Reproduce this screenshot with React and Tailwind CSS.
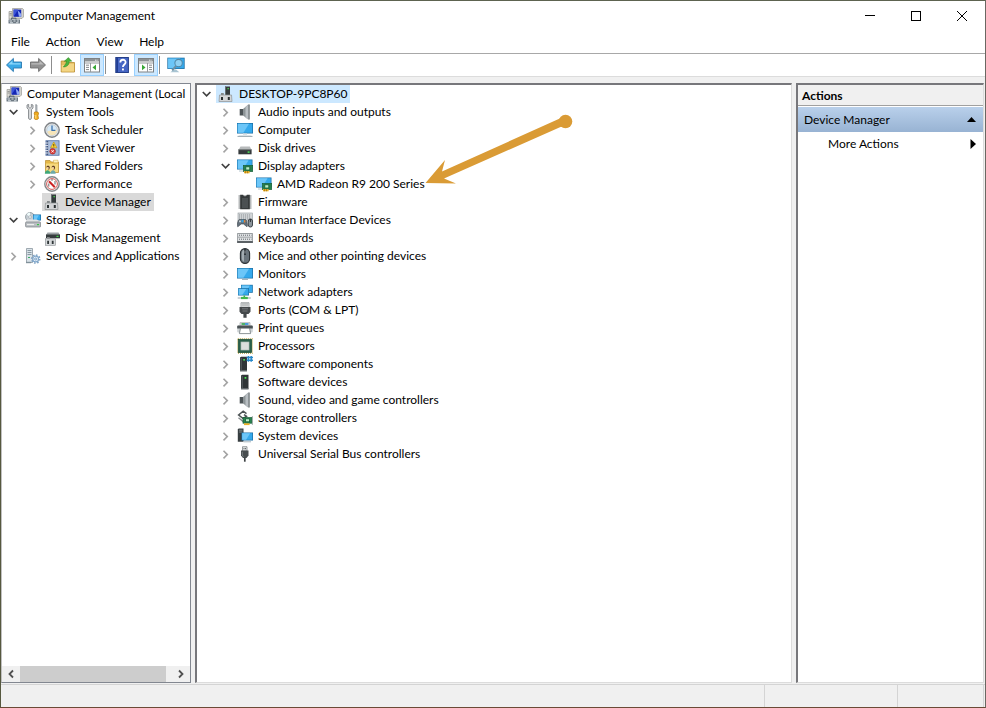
import React from 'react';

function Svg({ children, size = 16 }) {
  return (
    <svg width={size} height={size} viewBox="0 0 16 16" fill="none" className="block shrink-0" aria-hidden="true">
      {children}
    </svg>
  );
}

const Screen = ({ x, y, w, h }) => (
  <g>
    <rect x={x} y={y} width={w} height={h} fill="#1b6fa5" />
    <rect x={x + 0.7} y={y + 0.7} width={w - 1.4} height={h - 1.4} fill="#35a9ec" />
    <path d={`M${x + 0.7} ${y + 0.7}H${x + w * 0.75}L${x + w * 0.4} ${y + h - 0.7}H${x + 0.7}Z`} fill="#6cc6f8" />
  </g>
);

const icons = {
  computerManagement: (
    <Svg>
      <path d="M4.5 0.5H14.5L15.5 1.5V9L14 10.5H4.5Z" fill="#d3d3cd" stroke="#8d8d88" strokeWidth=".6" />
      <path d="M5.6 1.6H13.2V8.8H5.6Z" fill="#1426b4" />
      <path d="M5.6 1.6H10L8 5L5.6 8.6Z" fill="#3d55d8" />
      <path d="M9.5 2L13.2 6V8.8H11Z" fill="#8fa8f6" />
      <path d="M1 3.5H4V11H1Z" fill="#dadad5" stroke="#8b8b85" strokeWidth=".6" />
      <path d="M1.6 5.5H3.6M1.6 7H3.6" stroke="#6a6a6a" strokeWidth=".6" />
      <path d="M0.5 11.5H12V15.5H0.5Z" fill="#6d7983" />
      <path d="M3.5 11.5V10.2H8V11.5" stroke="#52606b" strokeWidth="1" />
      <path d="M1.5 13H4M5.5 13H7.5M9 13H11M2 14.8H5M8 14.8H10.5" stroke="#d9e0e4" strokeWidth="1" />
    </Svg>
  ),
  tools: (
    <Svg>
      <path d="M2 1V4L3.5 5.6V14.2C3.5 15.8 6.5 15.8 6.5 14.2V5.6L8 4V1L6.3 0.3V3.2L5 4.2L3.7 3.2V0.3Z" fill="#d6d8da" stroke="#777c80" strokeWidth=".8" />
      <path d="M10.7 0.5L12 1V8H10.7Z" fill="#bcc1c6" stroke="#7e858c" strokeWidth=".6" />
      <path d="M9.6 8H13L13.6 10L12.9 11L13.5 14.5C12.5 16 10 16 9.2 14.5L9.8 11L9.1 10Z" fill="#f0ad20" stroke="#b9780d" strokeWidth=".7" />
      <path d="M10.8 11V14.5" stroke="#ffe088" />
    </Svg>
  ),
  clock: (
    <Svg>
      <circle cx="8" cy="8" r="7.2" fill="#e9ecee" stroke="#7e8286" strokeWidth="1.4" />
      <circle cx="8" cy="8" r="5.3" fill="#d5e8f6" stroke="#b2b7bb" strokeWidth=".6" />
      <path d="M8 8L13 8A5 5 0 0 1 3.2 9.5Z" fill="#f7e5b8" />
      <path d="M8 3.5V8.4H11.4" stroke="#3d72ad" strokeWidth="1.3" />
    </Svg>
  ),
  event: (
    <Svg>
      <rect x="2" y="0.8" width="13" height="14.4" fill="#b7c9e4" stroke="#5673a6" strokeWidth="1" />
      <path d="M5.5 3H14M5.5 5H14M5.5 7H14M5.5 9H14M5.5 11H14M5.5 13H14" stroke="#7390bd" strokeWidth=".7" />
      <path d="M3.4 1V15" stroke="#42577f" strokeWidth="1.6" />
      <path d="M1 3H4M1 5.5H4M1 8H4M1 10.5H4M1 13H4" stroke="#e6e9ef" strokeWidth=".9" />
      <path d="M9.8 2L13 7.8H6.6Z" fill="#ffd52f" stroke="#ba8e10" strokeWidth=".6" />
      <path d="M9.8 4V6M9.8 6.5V7.2" stroke="#443500" strokeWidth=".9" />
      <circle cx="8.6" cy="11.3" r="2.8" fill="#d93c39" stroke="#a92420" strokeWidth=".6" />
      <path d="M7.4 10.1L9.8 12.5M9.8 10.1L7.4 12.5" stroke="#fff" strokeWidth=".9" />
    </Svg>
  ),
  sharedFolder: (
    <Svg>
      <path d="M1.5 2.5H6L7.5 4H14.5V14.5H1.5Z" fill="#e3b747" stroke="#b98b2c" strokeWidth=".7" />
      <path d="M2 5.5H14V14H2Z" fill="#f6d97d" />
      <path d="M9.5 2.2H14V4.8H9.5Z" fill="#fff2bb" stroke="#cfa647" strokeWidth=".5" />
      <path d="M2.3 9.5C2.3 7.2 5.8 7.2 5.8 9.5L5.2 11.4H4.2V9.5Z" fill="#5c3d20" />
      <path d="M7.6 9.5C7.6 7.2 11.1 7.2 11.1 9.5L10.5 11.4H9.5V9.5Z" fill="#5c3d20" />
      <circle cx="3.7" cy="10" r="1.1" fill="#f5cfa0" />
      <circle cx="9" cy="10" r="1.1" fill="#f5cfa0" />
      <path d="M.8 15.8C.8 11 6.4 11 6.4 15.8Z" fill="#3fa87b" />
      <path d="M6.4 15.8C6.4 11 11.7 11 11.7 15.8Z" fill="#6ba9a9" />
    </Svg>
  ),
  performance: (
    <Svg>
      <circle cx="8" cy="8" r="7.2" fill="#fff" stroke="#85888a" strokeWidth="1.4" />
      <circle cx="8" cy="8" r="5.4" stroke="#c94744" strokeWidth=".9" />
      <path d="M5 5.2L10.8 11.2" stroke="#cc2424" strokeWidth="2" />
      <path d="M4.8 7.5V10.6M8 3V4.8M11 5V8.5" stroke="#565656" strokeWidth=".9" />
    </Svg>
  ),
  device: (
    <Svg>
      <rect x="7" y="0.5" width="5" height="9" fill="#353b3d" />
      <path d="M7 .5H8V9H7Z" fill="#666e70" />
      <rect x="9.5" y="2" width="1.3" height="1.3" fill="#49df50" />
      <path d="M3 7H5.8V9.5H3Z" fill="#85898b" />
      <path d="M1.5 9H13.5L14 15.5H1Z" fill="#d3d5d7" stroke="#8e9294" strokeWidth=".7" />
      <path d="M3 11H5V14H3ZM9.8 11H11.8V14H9.8Z" fill="#282e30" />
    </Svg>
  ),
  storage: (
    <Svg>
      <circle cx="5" cy="5" r="4.5" fill="#c4ccd2" stroke="#7f8990" strokeWidth=".7" />
      <path d="M5 5L1.6 2.2A4.4 4.4 0 0 1 5 .6Z" fill="#effafa" />
      <circle cx="5" cy="5" r="1.3" fill="#fff" stroke="#858f96" strokeWidth=".5" />
      <Screen x={8} y={2.5} w={8} h={6} />
      <path d="M2 7.5H12L15.4 10H0.6Z" fill="#e1e3e5" />
      <rect x="0.6" y="10" width="15" height="5" rx=".8" fill="#b9bec2" stroke="#777d81" strokeWidth=".7" />
      <path d="M2 12.6H9" stroke="#f2f2f2" />
      <rect x="12" y="12" width="2" height="1.2" fill="#38c546" />
    </Svg>
  ),
  diskManagement: (
    <Svg>
      <path d="M3.5 2.5H14.5L16 5H2Z" fill="#9ca2a5" />
      <rect x="2" y="4.5" width="14" height="3.8" fill="#363c3e" />
      <rect x="12.5" y="5.8" width="2" height="1.2" fill="#42da4a" />
      <path d="M3 7H5.8V9H3Z" fill="#85898b" />
      <rect x="1.3" y="8.8" width="10.2" height="6.5" fill="#d5d8da" stroke="#898e91" strokeWidth=".6" />
      <path d="M3.2 10.8H5V14H3.2ZM7.8 10.8H9.6V14H7.8Z" fill="#303638" />
    </Svg>
  ),
  services: (
    <Svg>
      <path d="M1.5 .5H7.5V14.5H1.5Z" fill="#dae3e9" stroke="#8a979f" strokeWidth=".8" />
      <path d="M2.5 2.5H6.5M2.5 4.5H6.5M2.5 6.5H6.5" stroke="#75878f" strokeWidth=".8" />
      <rect x="3" y="9" width="2" height="1" fill="#39ae62" />
      <path d="M1 14.5H6" stroke="#81919a" strokeWidth="1.4" />
      <circle cx="10.7" cy="11" r="4" stroke="#7fa3c4" strokeWidth="1.6" strokeDasharray="1.6 1.5" />
      <circle cx="10.7" cy="11" r="2.9" fill="#eff6fc" stroke="#82a8cb" strokeWidth="1.2" />
      <circle cx="10.7" cy="11" r="1.2" fill="#c4d7e8" stroke="#4c7fae" strokeWidth=".5" />
    </Svg>
  ),
  speaker: (
    <Svg>
      <rect x="2.7" y="5" width="3.5" height="6.5" fill="#4d5457" />
      <path d="M6 5L11.3 .5V15.5L6 11.5Z" fill="#8d9497" />
      <path d="M8.5 3L11.3 .5V15.5L8.5 13.4Z" fill="#b9bfc3" />
      <path d="M11.2 .5H12.8V15.5H11.2Z" fill="#7c8386" />
    </Svg>
  ),
  computer: (
    <Svg>
      <Screen x={0} y={1} w={16} h={10.5} />
      <path d="M6 11.5H10V13H6Z" fill="#dbe2e6" />
      <path d="M2.5 13H13.5L15.5 14.6H.5Z" fill="#e4eaed" />
      <path d="M.5 14.4H15.5" stroke="#9aa8b0" strokeWidth="1" />
    </Svg>
  ),
  disk: (
    <Svg>
      <path d="M3.5 6.5H12.8L14.6 10H1.4Z" fill="#b7babb" />
      <rect x="1.4" y="9.5" width="13.2" height="4.8" fill="#34393b" />
      <path d="M1.4 9.7H14.6" stroke="#7b8182" strokeWidth=".8" />
      <rect x="10.6" y="11.4" width="2" height="1.4" fill="#4ded59" />
    </Svg>
  ),
  display: (
    <Svg>
      <Screen x={0} y={1.5} w={15.5} h={10} />
      <path d="M2 13H7" stroke="#b3c5ce" strokeWidth="1" />
      <rect x="6.5" y="7.5" width="9.3" height="6" fill="#25824e" stroke="#165d35" strokeWidth=".7" />
      <rect x="8.8" y="8.8" width="4" height="3.2" fill="#baf0c8" stroke="#165d35" strokeWidth=".8" />
      <path d="M7 14.2H12.6" stroke="#ecb328" strokeWidth="2.2" />
      <path d="M8.5 13V15.3M10.5 13V15.3" stroke="#8f641a" strokeWidth=".6" />
    </Svg>
  ),
  firmware: (
    <Svg>
      <path d="M1.5 2H14.5M1.5 4H14.5M1.5 6H14.5M1.5 8H14.5M1.5 10H14.5M1.5 12H14.5M1.5 14H14.5" stroke="#6d7375" strokeWidth="1" />
      <path d="M3.2 .8H6.2C6.5 2.8 9.5 2.8 9.8 .8H12.8V15.3H3.2Z" fill="#363a3b" />
      <path d="M5 4H11V14H5Z" fill="#4b5052" />
    </Svg>
  ),
  hid: (
    <Svg>
      <rect x="1" y="1" width="14.5" height="8" fill="#d8dbdd" stroke="#92999d" strokeWidth=".6" />
      <path d="M2.2 3H14.3M2.2 5H14.3M2.2 7H14.3" stroke="#73797d" strokeWidth="1" strokeDasharray="1 1" />
      <path d="M2.5 7.5H8.3C10 7.5 11 14 10 14.8L6.5 12H4.2L.8 14.8C-.5 13.8 .8 7.5 2.5 7.5Z" fill="#64707b" stroke="#39434a" strokeWidth=".6" />
      <path d="M2 9.3H4M3 8.4V10.5" stroke="#eef3f5" strokeWidth=".7" />
      <rect x="6.7" y="8.2" width="1.6" height="2.2" fill="#e78230" />
      <rect x="4.5" y="7.8" width="2" height="2.6" fill="#36a1e1" />
      <rect x="11.3" y="7" width="4.2" height="8" rx="2" fill="#8b949b" stroke="#30383d" strokeWidth=".9" />
      <path d="M13.4 7V10" stroke="#22282d" strokeWidth=".9" />
    </Svg>
  ),
  keyboard: (
    <Svg>
      <path d="M.4 3.5H15.6V12.5H.4Z" fill="#dfe2e4" stroke="#83898c" strokeWidth=".8" />
      <path d="M2 5.2H14.5M1.5 7.2H14.5M2 9.2H14.5" stroke="#64696d" strokeWidth="1" strokeDasharray="1 1" />
      <path d="M.2 11H15.8V13H.2Z" fill="#5b6165" />
    </Svg>
  ),
  mouse: (
    <Svg>
      <rect x="3.4" y=".6" width="9.2" height="14.8" rx="4.6" fill="#69737b" stroke="#292f33" strokeWidth="1.1" />
      <path d="M4.8 6C4.8 2.8 6 1.8 7 1.7V13.8C5 12.8 4.8 11 4.8 9Z" fill="#a3acb2" />
      <path d="M8 1V7" stroke="#30373d" strokeWidth="2" />
      <path d="M8 2.5V5.5" stroke="#c1c9ce" strokeWidth=".7" />
    </Svg>
  ),
  monitor: (
    <Svg>
      <Screen x={0} y={2} w={16} h={10.5} />
      <path d="M5 13.5H11" stroke="#a5b4bd" strokeWidth="1" />
    </Svg>
  ),
  network: (
    <Svg>
      <Screen x={4} y={.8} w={11.8} h={8} />
      <Screen x={1} y={4.2} w={11} h={7.3} />
      <path d="M.7 14H13.8" stroke="#b3babd" strokeWidth="1.4" />
      <path d="M4 14H10.8" stroke="#42b64c" strokeWidth="2.2" />
      <path d="M7.3 11.5V13" stroke="#42b64c" strokeWidth="1.6" />
    </Svg>
  ),
  port: (
    <Svg>
      <path d="M4 .7H12V6H4Z" fill="#e4e6e7" stroke="#858a8c" strokeWidth=".7" />
      <path d="M6 1V4.5M8 1V4.5M10 1V4.5" stroke="#8a8f91" strokeWidth=".8" />
      <path d="M2.5 5H13.5V9.8L11.5 12H9.6V15.7H6.4V12H4.5L2.5 9.8Z" fill="#45494b" />
      <path d="M5 6.8H11M5.5 9H10.5" stroke="#888d8f" strokeWidth=".7" />
    </Svg>
  ),
  printer: (
    <Svg>
      <path d="M3 2.7H13V6H3Z" fill="#e9eced" stroke="#8b9194" strokeWidth=".6" />
      <path d="M4.5 4H8" stroke="#3fae5b" strokeWidth="1.8" />
      <path d="M8 4H11.5" stroke="#3994da" strokeWidth="1.8" />
      <rect x=".2" y="5.4" width="15.6" height="7" rx="1" fill="#cfd4d6" />
      <path d="M.2 6.4Q.2 5.4 1.2 5.4H14.8Q15.8 5.4 15.8 6.4V8.6H.2Z" fill="#4b5255" />
      <path d="M3.5 8.2H12.5L13.6 13.6H2.4Z" fill="#fff" stroke="#5f686d" strokeWidth=".7" />
    </Svg>
  ),
  processor: (
    <Svg>
      <rect x=".8" y=".8" width="14.4" height="14.4" stroke="#b39b3a" strokeWidth="1.2" strokeDasharray="1 1" />
      <rect x="1.4" y="1.4" width="13.2" height="13.2" fill="#2a5f49" stroke="#174c34" strokeWidth=".7" />
      <rect x="4" y="4" width="8" height="8" fill="#dcdedc" stroke="#b5bfb9" strokeWidth=".7" />
    </Svg>
  ),
  softwareComponent: (
    <Svg>
      <path d="M3 1.5L4.2 .8H10V15.3H3Z" fill="#303537" />
      <path d="M4.2 2V14" stroke="#596063" />
      <rect x="6.3" y="3" width="1.6" height="1.6" fill="#4bef57" />
      <path d="M9.6 4.2H16M9.6 1.4H16M11.4 0V5.8M14.2 0V5.8" stroke="#2788c9" strokeWidth="1.5" />
      <path d="M3 14.8H10" stroke="#777e81" />
    </Svg>
  ),
  softwareDevice: (
    <Svg>
      <path d="M4 1.5L5.2 .8H11.5V15.3H4Z" fill="#303537" />
      <path d="M5.2 2V14" stroke="#596063" />
      <rect x="7.6" y="3" width="1.7" height="1.7" fill="#4bef57" />
      <path d="M4 14.8H11.5" stroke="#777e81" />
    </Svg>
  ),
  storageController: (
    <Svg>
      <path d="M9.5 3.6L6.2 1.2L1.6 5L6.2 8.6L9.5 6.2L7 4.6" stroke="#4c5254" strokeWidth="1.5" />
      <path d="M1.5 7.8L6.3 11.6" stroke="#858b8d" strokeWidth="1.4" />
      <rect x="6" y="7.6" width="9" height="5.6" fill="#28834f" stroke="#165d35" strokeWidth=".7" />
      <rect x="8.6" y="8.8" width="4" height="3" fill="#baf0c8" stroke="#165d35" strokeWidth=".8" />
      <path d="M7 14.2H12.6" stroke="#ecb328" strokeWidth="1.8" />
      <path d="M15.4 6V15" stroke="#9ea5a7" strokeWidth=".8" />
    </Svg>
  ),
  system: (
    <Svg>
      <path d="M.8 1L2 .4H6.5V13.8H.8Z" fill="#373e41" />
      <path d="M2 2.2H5.5M2 4H5.5" stroke="#92999c" strokeWidth=".8" />
      <Screen x={4.5} y={4.5} w={11.5} h={8} />
      <path d="M6.5 13.8H14" stroke="#a5b4bd" strokeWidth="1" />
    </Svg>
  ),
  usb: (
    <Svg>
      <path d="M5.5 .7H10V5H5.5Z" fill="#e1e4e5" stroke="#73797c" strokeWidth=".7" />
      <path d="M6.6 2H7.4V3.3H6.6ZM8.2 2H9V3.3H8.2Z" fill="#4d5254" />
      <path d="M4 4.6H11.5V9.5L9.5 12H6L4 9.5Z" fill="#484d4f" />
      <path d="M5.3 5.8V9L6.4 10.7" stroke="#858b8e" strokeWidth=".8" />
      <path d="M7.8 11.5V15.7" stroke="#3d4244" strokeWidth="1.7" />
    </Svg>
  ),
  back: (
    <Svg>
      <path d="M.5 8L7.4 1.4V5H15.5V11H7.4V14.6Z" fill="#3aa9e6" stroke="#2a78b0" strokeWidth=".9" strokeLinejoin="round" />
      <path d="M2.2 7.6L6.4 3.7V6.2H14.6V7.6Z" fill="#8dd8fb" />
    </Svg>
  ),
  forward: (
    <Svg>
      <path d="M15.5 8L8.6 1.4V5H.5V11H8.6V14.6Z" fill="#919191" stroke="#6f6f6f" strokeWidth=".9" strokeLinejoin="round" />
      <path d="M13.8 7.6L9.6 3.7V6.2H1.4V7.6Z" fill="#bcbcbc" />
    </Svg>
  ),
  exportFolder: (
    <Svg>
      <path d="M1.2 4H6L7.5 5.5H14.5V15H1.2Z" fill="#e3bc5f" stroke="#b88a2e" strokeWidth=".8" />
      <path d="M1.8 8H8L9.5 6.8H14V14.4H1.8Z" fill="#f3d583" />
      <path d="M3.3 10C4.2 8.4 6 7.5 6.6 4.2H4.4L8.4 .6L11.8 4.2H9.3C8.9 8.7 6.5 9.8 3.3 10Z" fill="#4bb43d" stroke="#278422" strokeWidth=".5" />
    </Svg>
  ),
  paneLeft: (
    <Svg>
      <rect x=".5" y="1.5" width="15" height="13.5" fill="#fff" stroke="#7d8184" />
      <path d="M1 2H15V4.5H1Z" fill="#8d9295" />
      <path d="M11 3.2H14" stroke="#fff" strokeWidth=".8" strokeDasharray="1 .5" />
      <path d="M1 6H15M6.5 6V15" stroke="#969a9d" />
      <path d="M2 8.2H5M2 10.4H5M2 12.6H5" stroke="#85898c" />
      <path d="M12 7.5V13.3L8.5 10.4Z" fill="#37a735" />
    </Svg>
  ),
  paneRight: (
    <Svg>
      <rect x=".5" y="1.5" width="15" height="13.5" fill="#fff" stroke="#7d8184" />
      <path d="M1 2H15V4.5H1Z" fill="#8d9295" />
      <path d="M11 3.2H14" stroke="#fff" strokeWidth=".8" strokeDasharray="1 .5" />
      <path d="M1 6H15M9.5 6V15" stroke="#969a9d" />
      <path d="M11 8.2H14M11 10.4H14M11 12.6H14" stroke="#85898c" />
      <path d="M4 7.5V13.3L7.5 10.4Z" fill="#37a735" />
    </Svg>
  ),
  help: (
    <Svg>
      <rect x="1.8" y=".5" width="12.6" height="15" fill="#4666c4" stroke="#243f89" />
      <path d="M2.3 1H4V15H2.3Z" fill="#203d91" />
      <path d="M6.3 5.4C6.3 1.9 11.6 1.9 11.6 5.3C11.6 7.5 8.9 7.5 8.9 10" stroke="#fff" strokeWidth="1.8" />
      <rect x="8" y="11.5" width="1.9" height="1.9" fill="#fff" />
    </Svg>
  ),
  scan: (
    <Svg size={18}>
      <Screen x={.3} y={1.5} w={15.4} h={10} />
      <path d="M3 14.5H11L8 12H6Z" fill="#a9c4d2" />
      <path d="M8 8.8L4.6 12.8" stroke="#6d8fa3" strokeWidth="1.6" />
      <circle cx="10.3" cy="6.3" r="3.3" fill="#8fd0f2" stroke="#4f86a6" strokeWidth=".9" />
    </Svg>
  ),
};

const Chevron = ({ open }) => (
  <svg width="10" height="10" viewBox="0 0 10 10" fill="none" aria-hidden="true">
    {open ? (
      <path d="M0.8 3L4.6 6.8L8.4 3" stroke="#404040" strokeWidth="1.7" />
    ) : (
      <path d="M2.5 1.8L6.3 5.6L2.5 9.4" stroke="#a3a3a3" strokeWidth="1.6" />
    )}
  </svg>
);

function Row({ icon, label, state, mark }) {
  const bg = mark === 'active' ? 'bg-[#cce8ff]' : mark === 'idle' ? 'bg-[#d9d9d9]' : '';
  return (
    <div className="flex h-[18px] items-center">
      {state !== 'root' && (
        <span className="flex w-[19px] shrink-0 justify-center">
          {state && (
            <button type="button" aria-label={`Toggle ${label}`} className="flex">
              <Chevron open={state === 'open'} />
            </button>
          )}
        </span>
      )}
      <button type="button" className={`flex h-[18px] items-center gap-[5px] whitespace-nowrap pl-0.5 pr-[3px] ${bg}`}>
        {icons[icon]}
        <span>{label}</span>
      </button>
    </div>
  );
}

function Branch({ nodes }) {
  return (
    <ul>
      {nodes.map((n) => (
        <li key={n.label}>
          <Row {...n} />
          {n.children && (
            <div className={n.state === 'root' ? '' : 'pl-[19px]'}>
              <Branch nodes={n.children} />
            </div>
          )}
        </li>
      ))}
    </ul>
  );
}

const consoleTree = [
  {
    label: 'Computer Management (Local', icon: 'computerManagement', state: 'root', children: [
      {
        label: 'System Tools', icon: 'tools', state: 'open', children: [
          { label: 'Task Scheduler', icon: 'clock', state: 'closed' },
          { label: 'Event Viewer', icon: 'event', state: 'closed' },
          { label: 'Shared Folders', icon: 'sharedFolder', state: 'closed' },
          { label: 'Performance', icon: 'performance', state: 'closed' },
          { label: 'Device Manager', icon: 'device', mark: 'idle' },
        ],
      },
      {
        label: 'Storage', icon: 'storage', state: 'open', children: [
          { label: 'Disk Management', icon: 'diskManagement' },
        ],
      },
      { label: 'Services and Applications', icon: 'services', state: 'closed' },
    ],
  },
];

const deviceTree = [
  {
    label: 'DESKTOP-9PC8P60', icon: 'device', state: 'open', mark: 'active', children: [
      { label: 'Audio inputs and outputs', icon: 'speaker', state: 'closed' },
      { label: 'Computer', icon: 'computer', state: 'closed' },
      { label: 'Disk drives', icon: 'disk', state: 'closed' },
      {
        label: 'Display adapters', icon: 'display', state: 'open', children: [
          { label: 'AMD Radeon R9 200 Series', icon: 'display' },
        ],
      },
      { label: 'Firmware', icon: 'firmware', state: 'closed' },
      { label: 'Human Interface Devices', icon: 'hid', state: 'closed' },
      { label: 'Keyboards', icon: 'keyboard', state: 'closed' },
      { label: 'Mice and other pointing devices', icon: 'mouse', state: 'closed' },
      { label: 'Monitors', icon: 'monitor', state: 'closed' },
      { label: 'Network adapters', icon: 'network', state: 'closed' },
      { label: 'Ports (COM & LPT)', icon: 'port', state: 'closed' },
      { label: 'Print queues', icon: 'printer', state: 'closed' },
      { label: 'Processors', icon: 'processor', state: 'closed' },
      { label: 'Software components', icon: 'softwareComponent', state: 'closed' },
      { label: 'Software devices', icon: 'softwareDevice', state: 'closed' },
      { label: 'Sound, video and game controllers', icon: 'speaker', state: 'closed' },
      { label: 'Storage controllers', icon: 'storageController', state: 'closed' },
      { label: 'System devices', icon: 'system', state: 'closed' },
      { label: 'Universal Serial Bus controllers', icon: 'usb', state: 'closed' },
    ],
  },
];

function ToolButton({ icon, label, active }) {
  return (
    <button
      type="button"
      aria-label={label}
      className={`flex h-[22px] w-6 items-center justify-center ${active ? 'border border-[#99d1ff] bg-[#cce8ff]' : ''}`}
    >
      {icons[icon]}
    </button>
  );
}

const ToolDivider = () => <span className="ml-px mr-1 h-[18px] w-px bg-[#8d8d8d]" />;

function CaptionButton({ label, children }) {
  return (
    <button type="button" aria-label={label} className="flex h-[30px] w-[46px] items-center justify-center">
      <svg width="12" height="12" viewBox="0 0 12 12" fill="none" stroke="#000" aria-hidden="true">{children}</svg>
    </button>
  );
}

function ScrollButton({ label, d }) {
  return (
    <button type="button" aria-label={label} className="flex w-[18px] items-center justify-center">
      <svg width="8" height="10" viewBox="0 0 8 10" fill="none" aria-hidden="true">
        <path d={d} stroke="#505050" strokeWidth="1.8" />
      </svg>
    </button>
  );
}

export default function App() {
  return (
    <div className="flex h-screen flex-col overflow-hidden border border-b-[#6b4a36] border-l-[#56583f] border-r-[#6b6862] border-t-[#5d6350] bg-[#f0f0f0] font-[Lato,'Open_Sans',sans-serif] text-[12px] leading-[18px] text-black">
      <header className="flex h-[30px] shrink-0 items-center bg-white pl-[7px]">
        {icons.computerManagement}
        <h1 className="flex-1 pl-1.5">Computer Management</h1>
        <CaptionButton label="Minimize"><path d="M1 5.5H11" /></CaptionButton>
        <CaptionButton label="Maximize"><rect x="1.5" y="1.5" width="9" height="9" /></CaptionButton>
        <CaptionButton label="Close"><path d="M1 1L11 11M11 1L1 11" /></CaptionButton>
      </header>

      <nav className="flex h-[22px] shrink-0 items-center bg-white pl-0.5" aria-label="Menu bar">
        {['File', 'Action', 'View', 'Help'].map((m) => (
          <button key={m} type="button" className="px-2">{m}</button>
        ))}
      </nav>

      <div className="flex h-6 shrink-0 items-end border-b border-t border-b-[#dcdcdc] border-t-[#a8a8a8] bg-white pl-px">
        <div className="flex h-[22px] items-center">
          <ToolButton icon="back" label="Back" />
          <ToolButton icon="forward" label="Forward" />
          <ToolDivider />
          <ToolButton icon="exportFolder" label="Up one level" />
          <ToolButton icon="paneLeft" label="Show console tree" active />
          <ToolDivider />
          <ToolButton icon="help" label="Help" />
          <ToolButton icon="paneRight" label="Show action pane" active />
          <ToolDivider />
          <ToolButton icon="scan" label="Scan for hardware changes" />
        </div>
      </div>

      <main className="flex min-h-0 flex-1 gap-1 pr-px pt-1.5">
        <aside className="flex w-[190px] shrink-0 flex-col border border-[#828790] border-l-[#c0c0c0] bg-white">
          <div className="min-h-0 flex-1 overflow-hidden pl-0.5 pt-px">
            <Branch nodes={consoleTree} />
          </div>
          <div className="flex h-4 shrink-0 bg-[#f0f0f0]">
            <ScrollButton label="Scroll left" d="M6 1.5L2.5 5L6 8.5" />
            <div className="flex flex-1">
              <div className="w-[146px] bg-[#cdcdcd]" />
            </div>
            <ScrollButton label="Scroll right" d="M2 1.5L5.5 5L2 8.5" />
          </div>
        </aside>

        <section className="relative min-w-0 flex-1 border-b border-l-2 border-r border-t-2 border-b-[#dcdcdc] border-l-[#77777b] border-r-[#dcdcdc] border-t-[#77777b] bg-white">
          <Branch nodes={deviceTree} />
          <svg className="pointer-events-none absolute left-[223px] top-[20px]" width="160" height="90" viewBox="420 105 160 90" aria-hidden="true">
            <path d="M425.5 183L445 160L442 171.5L562 117.5L565 125L444 178.5L456 183.5Z" fill="#da9b35" />
            <circle cx="565.5" cy="121.5" r="6.8" fill="#da9b35" />
          </svg>
        </section>

        <aside className="w-[188px] shrink-0 border-b border-l-2 border-r border-t-2 border-b-[#dcdcdc] border-l-[#77777b] border-r-[#dcdcdc] border-t-[#77777b] bg-white">
          <h2 className="h-[21px] border-b border-[#a0a0a0] bg-[#f0f0f0] pl-1 font-bold leading-[21px]">Actions</h2>
          <button type="button" className="mt-px flex h-[25px] w-full items-center justify-between bg-linear-to-b from-[#b9d0eb] to-[#98b3d3] pl-1.5 pr-[7px]">
            Device Manager
            <svg width="9" height="5" viewBox="0 0 9 5" aria-hidden="true"><path d="M0 5L4.5 0L9 5Z" fill="#000" /></svg>
          </button>
          <button type="button" className="flex h-6 w-full items-center justify-between pl-[30px] pr-[7px]">
            More Actions
            <svg width="6" height="10" viewBox="0 0 6 10" aria-hidden="true"><path d="M0.5 0V10L6 5Z" fill="#000" /></svg>
          </button>
        </aside>
      </main>

      <footer className="mt-px flex h-[23px] shrink-0 border-t border-[#d4d4d4]">
        <span className="flex-1 border-r border-[#d4d4d4]" />
        <span className="w-[133px] border-r border-[#d4d4d4]" />
        <span className="w-[86px] border-r border-[#d4d4d4]" />
        <span className="w-px" />
      </footer>
    </div>
  );
}
